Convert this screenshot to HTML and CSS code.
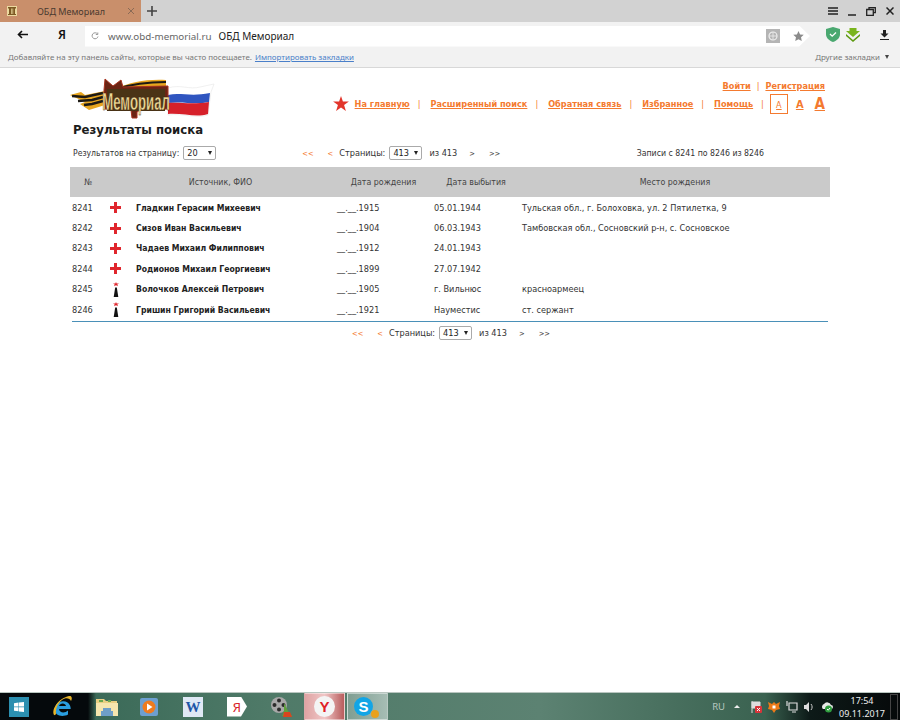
FILE: index.html
```html
<!DOCTYPE html>
<html lang="ru">
<head>
    <meta charset="UTF-8" />
    <title>ОБД Мемориал</title>
    <link rel="stylesheet" href="styles.css">
</head>
<body>
    <div id="screen">
        <!-- Browser tabs -->
        <div class="tabbar">
            <div class="tab">
                <svg class="tab-icon" width="10" height="10" viewBox="0 0 10 10"><rect width="10" height="10" fill="#ecd9a0"/><path d="M1 1h8v1.500H8V8h1v1H1V8h1V2.500H1zM4 2.500V8h.7V2.500zM5.500 2.500V8h.7V2.500z" fill="#7d5a24"/></svg>
                <span class="tab-title">ОБД Мемориал</span>
                <svg class="tab-close" width="8" height="8" viewBox="0 0 8 8"><path d="M1 1l6 6M7 1L1 7" stroke="#8a6a55" stroke-width="1"/></svg>
            </div>
            <svg class="new-tab" width="10" height="10" viewBox="0 0 10 10"><path d="M5 0v10M0 5h10" stroke="#444" stroke-width="1.600"/></svg>
            <div class="window-buttons">
                <svg width="10" height="8" viewBox="0 0 10 8"><path d="M0 1h10M0 4h10M0 7h10" stroke="#222" stroke-width="1.300"/></svg>
                <svg width="8" height="9" viewBox="0 0 8 9"><path d="M0 8h8" stroke="#222" stroke-width="1.500"/></svg>
                <svg width="10" height="9" viewBox="0 0 10 9"><path d="M3 2.500V.7h6.300v5H7.500M.7 2.500h6.600v5.800H.7z" fill="none" stroke="#222" stroke-width="1.300"/></svg>
                <svg width="8" height="8" viewBox="0 0 8 8"><path d="M.5.5l7 7M7.500.5l-7 7" stroke="#222" stroke-width="1.500"/></svg>
            </div>
        </div>

        <!-- Address bar -->
        <div class="toolbar">
            <svg class="back" width="11" height="9" viewBox="0 0 11 9"><path d="M11 4.500H2M5 1L1.500 4.500 5 8" fill="none" stroke="#111" stroke-width="1.600"/></svg>
            <span class="ya">Я</span>
            <div class="address">
                <svg class="reload" width="8" height="8" viewBox="0 0 8 8"><path d="M6.500 2A3 3 0 1 0 7 4.500M6.800.5v2h-2" fill="none" stroke="#999" stroke-width="1"/></svg>
                <span class="url">www.obd-memorial.ru</span>
                <span class="page-name">ОБД Мемориал</span>
                <span class="translate"><svg width="10" height="10" viewBox="0 0 10 10"><circle cx="5" cy="5" r="4" fill="none" stroke="#eee" stroke-width="1.200"/><path d="M1 5h8M5 1v8" stroke="#eee" stroke-width=".8"/></svg></span>
                <svg class="star" width="11" height="10" viewBox="0 0 20 19"><path d="M10 0l3 6.500 7 .8-5.200 4.700 1.400 7L10 15.500 3.800 19l1.400-7L0 7.300l7-.8z" fill="#8b8b8b"/></svg>
            </div>
            <svg class="shield" width="14" height="15" viewBox="0 0 14 15"><path d="M7 0l7 2v5c0 4-3 6.500-7 8-4-1.500-7-4-7-8V2z" fill="#4aa870"/><path d="M4 7l2.200 2.200L10 5.500" fill="none" stroke="#fff" stroke-width="1.300"/></svg>
            <svg class="savefrom" width="14" height="14" viewBox="0 0 14 14"><path d="M3.500 0h7v3H14L7 9 0 3h3.500z" fill="#7ab51d"/><path d="M0 6l7 6 7-6v2l-7 6-7-6z" fill="#5e9a12"/></svg>
            <svg class="download" width="9" height="10" viewBox="0 0 9 10"><path d="M3 0h3v3.500h2.500L4.500 7.500.5 3.500H3zM0 9h9v1H0z" fill="#222"/></svg>
        </div>

        <!-- Bookmarks -->
        <div class="bookmarks">
            <span>Добавляйте на эту панель сайты, которые вы часто посещаете.</span>
            <a class="import" href="#">Импортировать закладки</a>
            <span class="other">Другие закладки<i class="arrow-small"></i></span>
        </div>

        <!-- Page -->
        <div class="page">
            <div class="header">
                <svg class="logo" width="146" height="44" viewBox="0 0 146 44">
                    <path d="M0 18l11-3 4 3 20-4v14l-16 5-9-6 5-2z" fill="#e7a51e"/>
                    <path d="M2 19l13 1 18-4M8 24l14-1 11-3M14 28l8-1 11-3" stroke="#1e1a14" stroke-width="2.600" fill="none"/>
                    <path d="M44 12c18-7 32-10 52-9v9c-18-1-34 1-50 6z" fill="#e7a51e"/>
                    <path d="M46 12c16-5 32-7 50-7M48 16c16-4 32-6 48-6" stroke="#1e1a14" stroke-width="2.200" fill="none"/>
                    <path d="M98 11c12-4 22 2 32-1l14-3-3 8-3 23c-12 4-24-2-40 0z" fill="#fff" stroke="#e6e6e6" stroke-width=".6"/>
                    <path d="M98 18c12-3 22 2 42-2l-1 9c-14 3-26-1-41 1z" fill="#2f55c0"/>
                    <path d="M98 26c12-1 24 2 41-1l-1 12c-12 4-24-1-40 0z" fill="#d6202a"/>
                    <path d="M34 13l1-11 8 7 8-6 2 7 45-1v23l-28 1-3 2v6h-5l-1-8-27-1z" fill="#6b2414" stroke="#a8321e" stroke-width="1"/>
                    <rect x="37" y="12" width="58" height="22" fill="#4a3416"/>
                    <text class="logo-text" transform="translate(66 33) scale(.55 1)" text-anchor="middle">Мемориал</text>
                </svg>
                <div class="header-links">
                    <div class="user-links">
                        <a href="#">Войти</a><span class="sep">|</span><a href="#">Регистрация</a>
                    </div>
                    <div class="nav">
                        <svg class="nav-star" width="16" height="15" viewBox="0 0 20 19"><path d="M10 0l2.400 7H20l-6.100 4.500L16.200 19 10 14.500 3.800 19l2.300-7.500L0 7h7.600z" fill="#e2352b"/></svg>
                        <a href="#">На главную</a><span class="sep">|</span>
                        <a href="#">Расширенный поиск</a><span class="sep">|</span>
                        <a href="#">Обратная связь</a><span class="sep">|</span>
                        <a href="#">Избранное</a><span class="sep">|</span>
                        <a href="#">Помощь</a><span class="sep">|</span>
                        <a class="size size-s" href="#">А</a>
                        <a class="size size-m" href="#">А</a>
                        <a class="size size-l" href="#">А</a>
                    </div>
                </div>
            </div>

            <h1 class="title">Результаты поиска</h1>

            <div class="controls">
                <span class="per-page">Результатов на страницу:</span>
                <span class="fake-select">20<i class="arrow"></i></span>
                <div class="pager pager-top">
                    <a class="first" href="#">&lt;&lt;</a>
                    <a class="prev" href="#">&lt;</a>
                    <span class="pages">Страницы:</span>
                    <span class="fake-select">413<i class="arrow"></i></span>
                    <span class="total">из 413</span>
                    <a class="next" href="#">&gt;</a>
                    <a class="last" href="#">&gt;&gt;</a>
                </div>
                <span class="records">Записи с 8241 по 8246 из 8246</span>
            </div>

            <table class="results">
                <colgroup>
                    <col class="col-num"><col class="col-mark"><col class="col-name">
                    <col class="col-birth"><col class="col-death"><col class="col-place">
                </colgroup>
                <thead>
                    <tr>
                        <th>№</th>
                        <th colspan="2">Источник, ФИО</th>
                        <th>Дата рождения</th>
                        <th>Дата выбытия</th>
                        <th>Место рождения</th>
                    </tr>
                </thead>
                <tbody>
                    <tr>
                        <td>8241</td>
                        <td class="mark"><svg class="cross" width="11" height="11" viewBox="0 0 11 11"><path d="M4 0h3v4h4v3H7v4H4V7H0V4h4z" fill="#e0262d"/></svg></td>
                        <td class="name">Гладкин Герасим Михеевич</td>
                        <td>__.__.1915</td>
                        <td>05.01.1944</td>
                        <td>Тульская обл., г. Болоховка, ул. 2 Пятилетка, 9</td>
                    </tr>
                    <tr>
                        <td>8242</td>
                        <td class="mark"><svg class="cross" width="11" height="11" viewBox="0 0 11 11"><path d="M4 0h3v4h4v3H7v4H4V7H0V4h4z" fill="#e0262d"/></svg></td>
                        <td class="name">Сизов Иван Васильевич</td>
                        <td>__.__.1904</td>
                        <td>06.03.1943</td>
                        <td>Тамбовская обл., Сосновский р-н, с. Сосновское</td>
                    </tr>
                    <tr>
                        <td>8243</td>
                        <td class="mark"><svg class="cross" width="11" height="11" viewBox="0 0 11 11"><path d="M4 0h3v4h4v3H7v4H4V7H0V4h4z" fill="#e0262d"/></svg></td>
                        <td class="name">Чадаев Михаил Филиппович</td>
                        <td>__.__.1912</td>
                        <td>24.01.1943</td>
                        <td></td>
                    </tr>
                    <tr>
                        <td>8244</td>
                        <td class="mark"><svg class="cross" width="11" height="11" viewBox="0 0 11 11"><path d="M4 0h3v4h4v3H7v4H4V7H0V4h4z" fill="#e0262d"/></svg></td>
                        <td class="name">Родионов Михаил Георгиевич</td>
                        <td>__.__.1899</td>
                        <td>27.07.1942</td>
                        <td></td>
                    </tr>
                    <tr>
                        <td>8245</td>
                        <td class="mark"><svg class="grave" width="6" height="15" viewBox="0 0 6 15"><path d="M3 0l.7 1.500H6L4.300 2.600 5 4.200 3 3.200 1 4.200l.7-1.600L0 1.500h2.300z" fill="#e0262d"/><path d="M2.200 5.500h1.600L5.300 15H.7z" fill="#111"/></svg></td>
                        <td class="name">Волочков Алексей Петрович</td>
                        <td>__.__.1905</td>
                        <td>г. Вильнюс</td>
                        <td>красноармеец</td>
                    </tr>
                    <tr>
                        <td>8246</td>
                        <td class="mark"><svg class="grave" width="6" height="15" viewBox="0 0 6 15"><path d="M3 0l.7 1.500H6L4.300 2.600 5 4.200 3 3.200 1 4.200l.7-1.600L0 1.500h2.300z" fill="#e0262d"/><path d="M2.200 5.500h1.600L5.300 15H.7z" fill="#111"/></svg></td>
                        <td class="name">Гришин Григорий Васильевич</td>
                        <td>__.__.1921</td>
                        <td>Науместис</td>
                        <td>ст. сержант</td>
                    </tr>
                </tbody>
            </table>
            <div class="results-end"></div>

            <div class="pager pager-bottom">
                <a class="first" href="#">&lt;&lt;</a>
                <a class="prev" href="#">&lt;</a>
                <span class="pages">Страницы:</span>
                <span class="fake-select">413<i class="arrow"></i></span>
                <span class="total">из 413</span>
                <a class="next" href="#">&gt;</a>
                <a class="last" href="#">&gt;&gt;</a>
            </div>
        </div>

        <!-- Windows taskbar -->
        <div class="taskbar">
            <div class="start"><svg width="10" height="10" viewBox="0 0 10 10"><path d="M0 1.300L4.500.6v4H0zM5 .5L10 0v4.600H5zM0 5.200h4.500v4.100L0 8.700zM5 5.200h5V10l-5-.6z" fill="#fff"/></svg></div>
            <svg class="task-icon ie" width="22" height="24" viewBox="0 0 22 24"><path d="M4 14a8 8 0 0 1 15-3.500c.5 1 .7 2.500.7 3.500H8c.3 4 6 4.500 9 1.500v4c-5 3-14 1.500-13-5.500zM8 11h7c-.5-3.500-6-3.500-7 0z" fill="#2a9ee0"/><path d="M3 20C0 14 8 3 18 1c3-.5 3.500 2.500 2 5-1-2-3-3-6-2.500C9 5 4 12 5 19c-.5.700-1.500 1.500-2 1z" fill="#e8b52a"/></svg>
            <svg class="task-icon folder" width="22" height="20" viewBox="0 0 22 20"><path d="M0 2h8l2 2h11v15H0z" fill="#e9cf83"/><path d="M0 6h22v13H0z" fill="#f6e6ae"/><path d="M3 3h4v2H3zM12 3h3v2h-3z" fill="#6aa84f"/><path d="M7 11h8v3h2v5H5v-5h2z" fill="#6f9fc8"/></svg>
            <svg class="task-icon player" width="18" height="18" viewBox="0 0 18 18"><rect width="18" height="18" rx="2" fill="#6c9fd0"/><circle cx="9" cy="9" r="6.500" fill="#ee7b1f"/><path d="M7 5.500L12.500 9 7 12.500z" fill="#fff"/></svg>
            <div class="task-icon word"><span>W</span></div>
            <div class="task-icon yandex"><span>Я</span></div>
            <svg class="task-icon reel" width="22" height="22" viewBox="0 0 22 22"><circle cx="9" cy="9" r="8" fill="#a8a8a8"/><circle cx="9" cy="4.500" r="2" fill="#2b2b2b"/><circle cx="4.500" cy="9" r="2" fill="#2b2b2b"/><circle cx="13.500" cy="9" r="2" fill="#2b2b2b"/><circle cx="9" cy="13.500" r="2" fill="#2b2b2b"/><path d="M14 7l4 8 4 5H12l2-5z" fill="#5fa13c"/><path d="M14 16h6l2 5H13z" fill="#d8441f"/></svg>
            <div class="task-tile tile-yandex"><span class="y-circle">Y</span></div>
            <div class="task-tile tile-skype">
                <span class="s-circle">S</span>
                <i class="skype-badge"></i>
            </div>
            <div class="tray">
                <span class="lang">RU</span>
                <i class="tray-up"></i>
                <svg width="11" height="12" viewBox="0 0 11 12"><path d="M1 0v12M1 1h8v6H1z" fill="#ddd" stroke="#ddd"/><rect x="4" y="5" width="7" height="7" rx="1" fill="#d8343a"/><path d="M6 7l3 3M9 7l-3 3" stroke="#fff"/></svg>
                <svg width="12" height="12" viewBox="0 0 12 12"><path d="M6 1l2 2 4-2-1 4 1 3-4 1-2 3-2-3-4-1 1-3-1-4 4 2z" fill="#ee7a18"/><rect x="4.500" y="4.500" width="3" height="3" fill="#fff"/></svg>
                <svg width="12" height="12" viewBox="0 0 12 12"><path d="M3 2h8v7H3zM1 0v5M6 11h4" fill="none" stroke="#ddd" stroke-width="1.200"/></svg>
                <svg width="10" height="10" viewBox="0 0 10 10"><path d="M0 3h2l3-3v10L2 7H0z" fill="#ddd"/><path d="M7 2c1.500 2 1.500 4 0 6" fill="none" stroke="#ccc"/></svg>
                <svg width="13" height="12" viewBox="0 0 13 12"><path d="M3 8a3 3 0 0 1 1-5 4 4 0 0 1 7 1 2 2 0 0 1 0 4z" fill="#e8e8e8"/><circle cx="8.500" cy="8" r="3.500" fill="#2f9e3f"/><path d="M7 8l1.200 1.200L10 7" fill="none" stroke="#fff"/></svg>
            </div>
            <div class="clock">
                <span>17:54</span>
                <span>09.11.2017</span>
            </div>
            <i class="show-desktop"></i>
        </div>
    </div>
</body>
</html>
```

FILE: styles.css
```css
html, body {
    margin: 0;
    padding: 0;
    background: #fff;
    overflow: hidden;
}

#screen {
    width: 900px;
    height: 720px;
    display: flex;
    flex-direction: column;
    font-family: "Noto Sans", sans-serif;
}

/* Browser chrome */
.tabbar {
    height: 22px;
    background: #d2d2d2;
    display: flex;
    align-items: center;
    flex-shrink: 0;
}

.tab {
    width: 141px;
    height: 22px;
    background: #c98f6b;
    display: flex;
    align-items: center;
    box-sizing: border-box;
    padding-left: 7px;
    flex-shrink: 0;
}

.tab-title {
    font-size: 9px;
    color: #4a3a30;
    margin-left: 20px;
    width: 90px;
}

.new-tab {
    margin-left: 6px;
}

.window-buttons {
    margin-left: auto;
    display: flex;
    align-items: center;
    gap: 10px;
    padding-right: 6px;
}

.toolbar {
    height: 25px;
    background: #f2f2f2;
    display: flex;
    align-items: center;
    flex-shrink: 0;
}

.back {
    margin-left: 17px;
}

.ya {
    font-size: 12px;
    font-weight: 600;
    color: #111;
    margin-left: 30px;
    width: 27px;
}

.address {
    height: 21px;
    width: 725px;
    flex-shrink: 0;
    margin-top: 3px;
    background: #fff;
    display: flex;
    align-items: center;
    clip-path: polygon(0 0, 98.500% 0, 100% 50%, 98.500% 100%, 0 100%);
    box-sizing: border-box;
    padding-left: 6px;
}

.reload {
    margin-right: 9px;
}

.url {
    font-size: 9.800px;
    color: #666;
}

.page-name {
    font-size: 10px;
    color: #222;
    margin-left: 7px;
}

.translate {
    margin-left: auto;
    width: 14px;
    height: 14px;
    background: #b5b5b5;
    display: flex;
    align-items: center;
    justify-content: center;
}

.star {
    margin-left: 13px;
    margin-right: 6px;
}

.shield {
    margin-left: 16px;
}

.savefrom {
    margin-left: 6px;
}

.download {
    margin-left: 20px;
}

.bookmarks {
    height: 21px;
    background: #f2f2f2;
    border-bottom: 1px solid #d8d8d8;
    box-sizing: border-box;
    display: flex;
    align-items: center;
    font-size: 7.950px;
    color: #777;
    padding: 0 11px 0 8px;
    flex-shrink: 0;
}

.import {
    color: #4a7fc9;
    margin-left: 3px;
}

.other {
    margin-left: auto;
}

.arrow-small {
    display: inline-block;
    border-left: 2.500px solid transparent;
    border-right: 2.500px solid transparent;
    border-top: 4px solid #444;
    margin-left: 5px;
    vertical-align: 1px;
}

/* Page */
.page {
    flex: 1;
    background: #fff;
    padding-left: 70px;
    font-family: "DejaVu Sans Condensed", "DejaVu Sans", sans-serif;
    font-size: 9.100px;
    color: #333;
    min-height: 0;
}

a {
    color: #f47a2f;
}

.header {
    height: 54px;
    width: 760px;
    display: flex;
    align-items: flex-start;
    box-sizing: border-box;
    padding-top: 9px;
}

.logo {
    flex-shrink: 0;
}

.logo-text {
    font-family: "Liberation Sans", sans-serif;
    font-weight: bold;
    font-size: 24px;
    fill: #ecd894;
    stroke: #3a1a10;
    stroke-width: .4px;
}

.header-links {
    flex: 1;
    font-weight: bold;
    padding-right: 5px;
}

.user-links {
    display: flex;
    justify-content: flex-end;
    margin-top: 4px;
    height: 13px;
}

.sep {
    color: #f47a2f;
    font-weight: normal;
    margin: 0 6px;
}

.nav {
    display: flex;
    align-items: center;
    justify-content: flex-end;
    height: 20px;
}

.nav-star {
    margin: 0 6px 2px 0;
}

.nav .sep {
    margin: 0 10px 0 8px;
}

.size {
    display: block;
    text-align: center;
}

.size-s {
    width: 18px;
    height: 20px;
    line-height: 20px;
    box-sizing: border-box;
    border: 1px solid #f47a2f;
    font-size: 9px;
    font-weight: normal;
    margin-left: -4px;
}

.size-m {
    font-size: 11px;
    margin-left: 8px;
}

.size-l {
    font-size: 15px;
    margin-left: 11px;
}

.title {
    margin: 0 0 0 3px;
    height: 24px;
    line-height: 16px;
    font-size: 13px;
    font-weight: bold;
    color: #1c1c1c;
}

.controls {
    display: flex;
    align-items: center;
    height: 14px;
    padding-left: 3px;
    width: 691px;
}

.per-page {
    font-size: 8.600px;
    margin-right: 4px;
}

.fake-select {
    width: 33px;
    height: 14px;
    border: 1px solid #aaa;
    border-radius: 2px;
    box-sizing: border-box;
    display: flex;
    align-items: center;
    padding-left: 3px;
    color: #222;
}

.arrow {
    margin-left: auto;
    margin-right: 3px;
    border-left: 2.500px solid transparent;
    border-right: 2.500px solid transparent;
    border-top: 4px solid #222;
}

.pager {
    display: flex;
    align-items: center;
    height: 14px;
}

.pager a {
    font-size: 7.500px;
    text-decoration: none;
    color: #444;
}

.pager .first, .pager .prev {
    color: #f47a2f;
}

.prev {
    margin-left: 14px;
}

.pages {
    margin-left: 6px;
    margin-right: 4px;
}

.total {
    margin-left: 7px;
}

.next {
    margin-left: 12px;
}

.last {
    margin-left: 14px;
}

.pager-top {
    margin-left: 86px;
}

.pager-bottom {
    margin: 4px 0 0 282px;
}

.records {
    font-size: 8.700px;
    margin-left: auto;
}

.results {
    width: 760px;
    border-collapse: collapse;
    table-layout: fixed;
    margin-top: 7px;
}

.col-num { width: 36px; }
.col-mark { width: 28px; }
.col-name { width: 201px; }
.col-birth { width: 97px; }
.col-death { width: 88px; }

.results th {
    height: 30px;
    padding: 0;
    background: #cacaca;
    font-size: 8.800px;
    font-weight: normal;
    color: #444;
}

.results td {
    height: 20.400px;
    padding: 1px 0 0 2px;
    white-space: nowrap;
    box-sizing: border-box;
}

.results td.mark {
    padding-left: 4px;
}

.results td.mark svg {
    display: block;
}

.results td.name {
    font-size: 8.600px;
    font-weight: bold;
    color: #222;
}

.grave {
    margin-left: 3px;
}

.results-end {
    width: 756px;
    margin: 2px 0 0 2px;
    border-top: 1px solid #4a90b8;
}

/* Taskbar */
.taskbar {
    height: 28px;
    flex-shrink: 0;
    display: flex;
    align-items: center;
    background: linear-gradient(90deg, #05090c 0, #05090c 88px, #3b6a58 96px, #4f7a68 30%, #5c8272 60%, #3a6250 85%, #0d1a18 90%, #06090a 100%);
    border-top: 1px solid #b9c6c0;
    box-sizing: border-box;
    position: relative;
}

.start {
    width: 20px;
    height: 20px;
    margin-left: 9px;
    background: #2b8fb0;
    display: flex;
    align-items: center;
    justify-content: center;
    flex-shrink: 0;
}

.task-icon {
    flex-shrink: 0;
}

.ie { margin-left: 22px; }
.folder { margin-left: 23px; }
.player { margin-left: 22px; }

.word {
    width: 20px;
    height: 20px;
    margin-left: 25px;
    background: #dfe8f5;
    color: #1f56a8;
    font: bold 15px "Liberation Serif", serif;
    text-align: center;
    line-height: 20px;
}

.yandex {
    width: 20px;
    height: 20px;
    margin-left: 24px;
    background: #fff;
    color: #d8232a;
    font: 13px "Noto Sans", sans-serif;
    text-align: center;
    line-height: 20px;
    clip-path: polygon(0 0, 70% 0, 100% 50%, 70% 100%, 0 100%);
}

.reel { margin-left: 23px; }

.task-tile {
    width: 41px;
    height: 27px;
    box-sizing: border-box;
    display: flex;
    align-items: center;
    justify-content: center;
    flex-shrink: 0;
    position: relative;
    border: 1px solid rgba(255,255,255,.45);
}

.tile-yandex {
    margin-left: 12px;
    background: linear-gradient(90deg, #dfa3a3, #f0c6c6 50%, #b85d5d);
}

.tile-skype {
    margin-left: 2px;
    background: linear-gradient(90deg, #7f9e92, #a6bdb4);
}

.y-circle {
    width: 21px;
    height: 21px;
    border-radius: 50%;
    background: #f4f4f4;
    color: #e01f26;
    font: bold 15px/21px "Liberation Sans", sans-serif;
    text-align: center;
}

.s-circle {
    width: 19px;
    height: 19px;
    border-radius: 50%;
    background: #12a5e6;
    color: #fff;
    font: bold 15px/19px "Liberation Sans", sans-serif;
    text-align: center;
    margin-left: -8px;
}

/* warning dot on the skype icon */
.skype-badge {
    position: absolute;
    right: 8px;
    bottom: 1px;
    width: 8px;
    height: 8px;
    border-radius: 50%;
    background: #e9a11c;
}

.tray {
    margin-left: auto;
    display: flex;
    align-items: center;
    gap: 6px;
    margin-right: 4px;
}

.lang {
    font: 9.500px "Noto Sans", sans-serif;
    color: #b8c8c0;
    margin-right: 3px;
}

.tray-up {
    border-left: 3px solid transparent;
    border-right: 3px solid transparent;
    border-bottom: 3px solid #eee;
    margin-right: 5px;
}

.clock {
    display: flex;
    flex-direction: column;
    align-items: center;
    font: 9px/13px "Noto Sans", sans-serif;
    color: #eee;
    width: 50px;
}

.show-desktop {
    width: 8px;
    height: 26px;
    margin: 0 2px 0 3px;
    border: 1px solid #444;
    box-sizing: border-box;
}
```
